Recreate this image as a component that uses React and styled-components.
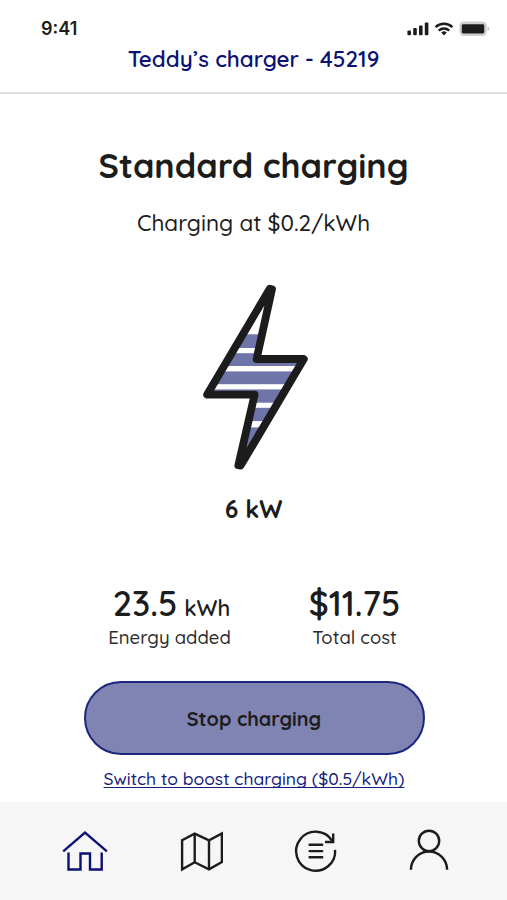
import React from 'react'
import styled, { createGlobalStyle } from 'styled-components';

const App = () => {
  return (
    <Screen>
        <GlobalStyle />
        <Header>
            <StatusBar>
                <Time>9:41</Time>
                <StatusIcons />
            </StatusBar>
            <ChargerName>Teddy’s charger - 45219</ChargerName>
        </Header>
        <Main>
            <Title>Standard charging</Title>
            <Rate>Charging at $0.2/kWh</Rate>
            <Bolt />
            <Power>6 kW</Power>
            <Stats>
                <Stat>
                    <Value $withUnit>23.5 <Unit>kWh</Unit></Value>
                    <Label>Energy added</Label>
                </Stat>
                <Stat>
                    <Value>$11.75</Value>
                    <Label>Total cost</Label>
                </Stat>
            </Stats>
            <StopButton>Stop charging</StopButton>
            <BoostLink href="#">Switch to boost charging ($0.5/kWh)</BoostLink>
        </Main>
        <Nav>
            <NavItem href="#" aria-label="Home" $active>
                <HomeIcon />
            </NavItem>
            <NavItem href="#" aria-label="Map">
                <MapIcon />
            </NavItem>
            <NavItem href="#" aria-label="History">
                <HistoryIcon />
            </NavItem>
            <NavItem href="#" aria-label="Profile">
                <UserIcon />
            </NavItem>
        </Nav>
    </Screen>
  )
}

export default App;


const StatusIcons = () => (
    <svg width="84" height="18" viewBox="406 20 84 18">
        <g fill="#1c1c1c">
            <rect x="407.4" y="30.4" width="3.6" height="4.8" rx="1" />
            <rect x="413.2" y="28" width="3.6" height="7.2" rx="1" />
            <rect x="419" y="25.4" width="3.6" height="9.8" rx="1" />
            <rect x="424.8" y="22.4" width="3.6" height="12.8" rx="1" />
        </g>
        <g fill="none" stroke="#1c1c1c" strokeWidth="2.5">
            <path d="M435.6 27.2a12.1 12.1 0 0 1 16.8 0" />
            <path d="M438.8 30.6a7.6 7.6 0 0 1 10.4 0" />
        </g>
        <path d="M441.2 32.6a4.2 4.2 0 0 1 5.6 0L444 35.4z" fill="#1c1c1c" />
        <rect x="459.4" y="21.6" width="27.4" height="14.4" rx="4.2" fill="#cfcfcf" />
        <rect x="461.8" y="24.3" width="22.4" height="9.2" rx="1.4" fill="#1c1c1c" />
        <path d="M487.6 26.8q1.7.5 1.7 2t-1.7 2z" fill="#bdbdbd" />
    </svg>
)

const boltPath = 'M269.8 288.7L207.2 394.6L254.6 394.6L238.4 465.2L240.6 465.6L303.8 359L256.6 359L272 289.2Z'

const Bolt = () => (
    <BoltSvg viewBox="200 280 110 192">
        <clipPath id="bolt">
            <path d={boltPath} />
        </clipPath>
        <g clipPath="url(#bolt)" fill="#7075a9">
            <rect x="200" y="334.3" width="110" height="13.7" />
            <rect x="200" y="353.2" width="110" height="12.8" />
            <rect x="200" y="371.4" width="110" height="12.8" />
            <rect x="200" y="389.4" width="110" height="13.3" />
            <rect x="200" y="407.8" width="110" height="13.3" />
            <rect x="200" y="427.4" width="110" height="44" />
        </g>
        <path d={boltPath} fill="none" stroke="#1c1c1c" strokeWidth="7.8" strokeLinejoin="round" />
    </BoltSvg>
)

const HomeIcon = () => (
    <Icon viewBox="60.7 827 48 48">
        <path d="M62.9 851.3L84.7 832.7L106.6 851.3" />
        <path d="M68.2 852.6V869.5H80.2V853.5H89.7V869.5H101.4V852.6" />
    </Icon>
)

const MapIcon = () => (
    <Icon viewBox="175.3 827 48 48">
        <path d="M182.4 840.3L195 833.6L209.3 840.3L222.2 833.4V862L209.3 869.4L195 862.3L182.4 869.4Z" />
        <path d="M195 833.6V862.3M209.3 840.3V869.4" />
    </Icon>
)

const HistoryIcon = () => (
    <Icon viewBox="290 827 48 48">
        <path d="M335.1 849.8A19.5 19.5 0 1 1 332.4 841.2" />
        <path d="M333.2 833.6V842H325" />
        <path d="M309.6 844.8H322.2M309.6 851.1H322.2M309.6 857.3H322.2" strokeLinecap="round" />
    </Icon>
)

const UserIcon = () => (
    <Icon viewBox="404.7 827 48 48">
        <circle cx="428.7" cy="840.9" r="10.2" />
        <path d="M410.6 869.8a18.1 18.3 0 0 1 36.2 0" />
    </Icon>
)


const GlobalStyle = createGlobalStyle`
*{
box-sizing: border-box;
}
body{
margin: 0;
background: #ffffff;
font-family: Quicksand, Inter, "Open Sans", sans-serif;
color: #1c1c1c;
}
`

let Screen = styled.div`
width: 100%;
height: 900px;
display: flex;
flex-direction: column;
overflow: hidden;
`

let Header = styled.header`
height: 94px;
border-bottom: 2px solid #dcdcdc;
text-align: center;
`

let StatusBar = styled.div`
display: flex;
justify-content: space-between;
padding: 20px 17px 0 41px;
height: 44px;
`

let Time = styled.span`
font-family: Inter, sans-serif;
font-size: 18px;
line-height: 18px;
font-weight: 600;
`

let ChargerName = styled.h2`
margin: 0;
font-size: 22.4px;
line-height: 30px;
font-weight: 600;
color: #0a1172;
`

let Main = styled.main`
flex: 1;
display: flex;
flex-direction: column;
align-items: center;
`

let Title = styled.h1`
margin: 50px 0 0;
font-size: 34.2px;
line-height: 44px;
font-weight: 700;
`

let Rate = styled.p`
margin: 20px 0 0;
font-size: 22.5px;
line-height: 30px;
font-weight: 500;
`

let BoltSvg = styled.svg`
width: 110px;
height: 192px;
margin: 42px 0 0 3px;
flex: none;
`

let Power = styled.p`
margin: 22px 0 0;
font-size: 24.6px;
line-height: 30px;
font-weight: 700;
`

let Stats = styled.div`
display: grid;
grid-template-columns: 184px 184px;
column-gap: 1px;
margin: 60px 0 0 17px;
`

let Stat = styled.div`
display: flex;
flex-direction: column;
align-items: center;
`

let Value = styled.div`
display: flex;
align-items: baseline;
gap: 7px;
height: 41px;
padding-left: ${p => p.$withUnit ? '4px' : '0'};
font-size: 34.2px;
line-height: 40px;
font-weight: 600;
`

let Unit = styled.span`
font-size: 22px;
`

let Label = styled.div`
font-size: 18.5px;
line-height: 24px;
font-weight: 500;
color: #2c2c2c;
`

let StopButton = styled.button`
width: 341px;
height: 74px;
margin: 32px 0 0 1px;
border: 2px solid #1c267d;
border-radius: 37px;
background: #8084b3;
color: #1c1c1c;
font-family: inherit;
font-size: 19.8px;
font-weight: 700;
`

let BoostLink = styled.a`
margin: 11px 0 0 1px;
font-size: 17.5px;
line-height: 24px;
font-weight: 500;
color: #15207a;
text-decoration: underline;
text-decoration-thickness: 1px;
text-underline-offset: 2px;
text-decoration-skip-ink: none;
`

let Nav = styled.nav`
height: 98px;
display: flex;
justify-content: space-between;
padding: 25px 54.3px 0 60.7px;
background: #f6f6f6;
`

let NavItem = styled.a`
width: 48px;
height: 48px;
color: ${p => p.$active ? '#0a1172' : '#1c1c1c'};
`

let Icon = styled.svg`
display: block;
width: 48px;
height: 48px;
fill: none;
stroke: currentColor;
stroke-width: 2.4;
`
